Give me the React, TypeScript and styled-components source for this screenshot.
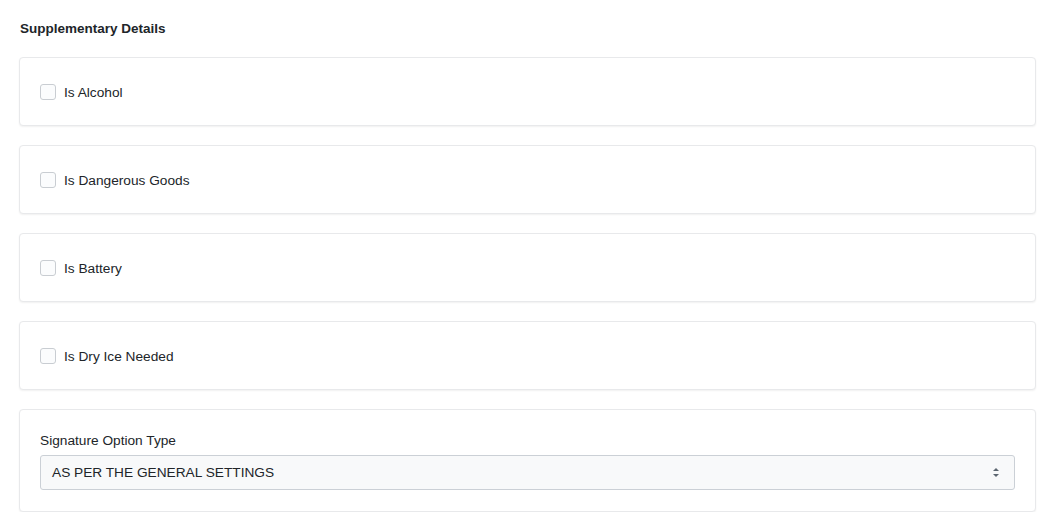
import React from "react";
import styled, { createGlobalStyle } from "styled-components";

const Global = createGlobalStyle`
  html, body { margin: 0; padding: 0; background: #ffffff; }
  body { font-family: "Liberation Sans", Arial, sans-serif; color: #212529; }
`;

const Page = styled.div`
  padding: 20px 19px 0 19px;
  width: 1055px;
  box-sizing: border-box;
`;

const Title = styled.h2`
  margin: 0 0 20px 1px;
  font-size: 13.5px;
  line-height: 17px;
  font-weight: 700;
  color: #212529;
`;

const Stack = styled.div`
  display: flex;
  flex-direction: column;
  gap: 19px;
`;

const Card = styled.div<{ $top: number; $bottom: number }>`
  border: 1px solid #e8e9eb;
  border-radius: 4px;
  box-shadow: 0 1px 2px rgba(0, 0, 0, 0.06);
  background: #fff;
  padding: ${(p) => p.$top}px 20px ${(p) => p.$bottom}px 20px;
`;

const CheckRow = styled.label`
  display: flex;
  align-items: center;
  gap: 8px;
  height: 20px;
  font-size: 13.7px;
  color: #212529;
`;

const Box = styled.span`
  width: 14px;
  height: 14px;
  border: 1px solid #c9cdd2;
  border-radius: 3px;
  background: #fbfcfd;
  display: inline-block;
`;

const FieldLabel = styled.div`
  font-size: 13.7px;
  line-height: 20px;
  margin-bottom: 4px;
  margin-top: 1px;
  color: #212529;
`;

const Select = styled.div`
  height: 35px;
  box-sizing: border-box;
  border: 1px solid #cbd0d6;
  border-radius: 3px;
  background: #f8f9fa;
  display: flex;
  align-items: center;
  justify-content: space-between;
  padding: 0 14px 0 11px;
  font-size: 13.7px;
  color: #212529;
`;

const Arrows = () => (
  <svg width="8" height="11" viewBox="0 0 8 11">
    <path d="M1 4 L4 1 L7 4 Z" fill="#5c6670" />
    <path d="M1 7 L4 10 L7 7 Z" fill="#5c6670" />
  </svg>
);

const items = ["Is Alcohol", "Is Dangerous Goods", "Is Battery", "Is Dry Ice Needed"];

export default function App() {
  return (
    <>
      <Global />
      <Page>
        <Title>Supplementary Details</Title>
        <Stack>
          {items.map((t) => (
            <Card key={t} $top={24} $bottom={23}>
              <CheckRow>
                <Box />
                {t}
              </CheckRow>
            </Card>
          ))}
          <Card $top={20} $bottom={21}>
            <FieldLabel>Signature Option Type</FieldLabel>
            <Select>
              <span>AS PER THE GENERAL SETTINGS</span>
              <Arrows />
            </Select>
          </Card>
        </Stack>
      </Page>
    </>
  );
}
